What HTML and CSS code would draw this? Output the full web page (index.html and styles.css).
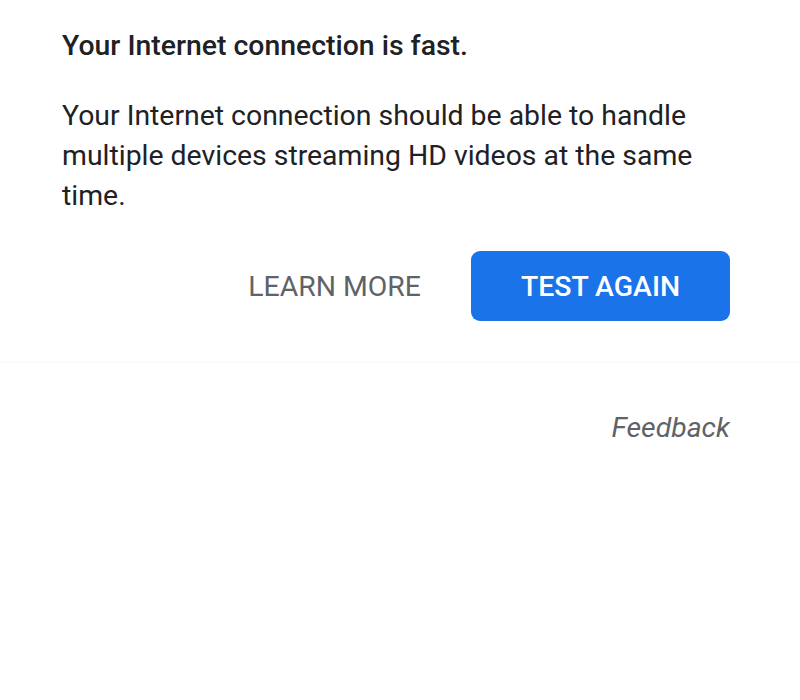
FILE: index.html
```html
<!DOCTYPE html>
<html lang="en">
<head>
<meta charset="utf-8">
<title>Speed test result</title>
<link rel="stylesheet" href="styles.css">
</head>
<body>
<main class="card">
  <section class="result">
    <h1 class="title">Your Internet connection is fast.</h1>
    <p class="desc">Your Internet connection should be able to handle multiple devices streaming HD videos at the same time.</p>
    <div class="actions">
      <a class="btn-text" href="#">LEARN MORE</a>
      <button class="btn-primary" type="button">TEST AGAIN</button>
    </div>
  </section>
  <footer class="footer">
    <a class="feedback" href="#">Feedback</a>
  </footer>
</main>
</body>
</html>
```
FILE: styles.css
```css
html, body {
  margin: 0;
  padding: 0;
  background: #ffffff;
}
body {
  font-family: Roboto, "Liberation Sans", Arial, sans-serif;
  color: #202124;
}
.card {
  width: 800px;
  height: 700px;
  box-sizing: border-box;
}
.result {
  padding: 26px 70px 0 62px;
  height: 362px;
  box-sizing: border-box;
  border-bottom: 1px solid #fafafa;
  box-shadow: 0 2px 4px rgba(0,0,0,0.012);
}
.title {
  margin: 0;
  font-size: 28.4px;
  line-height: 40px;
  font-weight: 500;
  color: #202124;
}
.desc {
  margin: 30px 0 0;
  font-size: 28.4px;
  line-height: 40px;
  font-weight: 400;
  color: #202124;
}
.actions {
  display: flex;
  justify-content: flex-end;
  align-items: center;
  gap: 50px;
  margin-top: 35px;
}
.btn-text {
  font-size: 28.4px;
  color: #5f6368;
  text-decoration: none;
}
.btn-primary {
  width: 259px;
  height: 70px;
  border: 0;
  border-radius: 9px;
  background: #1a73e8;
  color: #ffffff;
  font-family: Roboto, "Liberation Sans", Arial, sans-serif;
  font-size: 28.4px;
  font-weight: 500;
}
.footer {
  display: flex;
  justify-content: flex-end;
  padding: 49px 70px 0 0;
}
.feedback {
  font-size: 28.4px;
  font-style: italic;
  color: #5f6368;
  text-decoration: none;
}
```
